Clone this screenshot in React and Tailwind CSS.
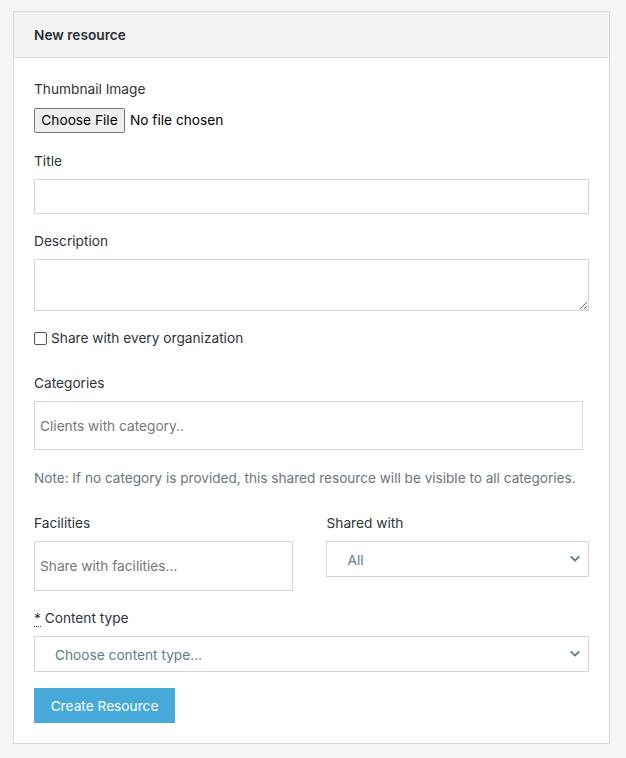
import React from "react";

function Chevron() {
  return (
    <svg width="10" height="7" viewBox="0 0 10 7" className="absolute right-[8px] top-1/2 -translate-y-1/2 pointer-events-none">
      <path d="M1.2 1.4 L5 5.2 L8.8 1.4" fill="none" stroke="#5f7c8c" strokeWidth="1.8" strokeLinecap="round" strokeLinejoin="round" />
    </svg>
  );
}

export default function App() {
  const font = { fontFamily: "Inter, 'Liberation Sans', sans-serif" };
  return (
    <div className="min-h-[758px] w-[626px] bg-[#f5f5f5] pt-[11px] pl-[13px]" style={font}>
      <div className="w-[597px] border border-[#d3dade] bg-white">
        <div className="h-[46px] border-b border-[#d3dade] bg-[#f4f4f4] px-[20px] pt-[1px] flex items-center">
          <span className="text-[13.7px] font-semibold text-[#2b2f33]">New resource</span>
        </div>
        <div className="px-[20px] pt-[21px] pb-[20px] text-[13.7px] leading-[21px] text-[#2f3338]">
          <div>Thumbnail Image</div>
          <div className="mt-[8px] flex items-center h-[25px]">
            <span className="h-[25px] w-[91px] flex items-center justify-center border border-[#767676] rounded-[2px] bg-[#efefef] text-black">Choose File</span>
            <span className="ml-[5px] text-black">No file chosen</span>
          </div>

          <div className="mt-[18px]">Title</div>
          <input className="mt-[7px] block w-[555px] h-[35px] border border-[#d6d6d6] bg-white outline-none" />

          <div className="mt-[17px]">Description</div>
          <textarea className="mt-[7px] block w-[555px] h-[52px] border border-[#d6d6d6] bg-white outline-none" />

          <div className="mt-[17px] h-[21px] flex items-center">
            <span className="w-[13px] h-[13px] border border-[#555] rounded-[2px] bg-white mr-[4px]" />
            <span>Share with every organization</span>
          </div>

          <div className="mt-[24px]">Categories</div>
          <div className="mt-[7px] w-[549px] h-[49px] border border-[#d6d6d6] flex items-center pl-[5px] pt-[1px] text-[#777]">
            Clients with category..
          </div>

          <div className="mt-[18px] text-[13.6px] text-[#6c757d] whitespace-nowrap">
            Note: If no category is provided, this shared resource will be visible to all categories.
          </div>

          <div className="mt-[24px] grid grid-cols-2 gap-x-[30px] w-[555px]">
            <div>
              <div>Facilities</div>
              <div className="mt-[7px] w-[259px] h-[50px] border border-[#d6d6d6] flex items-center pl-[5px] pt-[1px] text-[#777]">
                Share with facilities...
              </div>
            </div>
            <div className="-ml-[1px]">
              <div className="pl-[1px]">Shared with</div>
              <div className="relative mt-[7px] w-[263px] h-[36px] border border-[#d6d6d6] flex items-center pl-[21px] pt-[2px] text-[#5f7c8c]">
                All
                <Chevron />
              </div>
            </div>
          </div>

          <div className="mt-[17px]">
            <abbr title="required" className="no-underline border-b border-dotted border-[#333]">*</abbr> Content type
          </div>
          <div className="relative mt-[7px] w-[555px] h-[36px] border border-[#d6d6d6] flex items-center pl-[20px] pt-[2px] text-[#5f7c8c]">
            Choose content type...
            <Chevron />
          </div>

          <button className="mt-[16px] block w-[141px] h-[35px] pt-[1px] bg-[#46a9da] text-white">
            Create Resource
          </button>
        </div>
      </div>
    </div>
  );
}
